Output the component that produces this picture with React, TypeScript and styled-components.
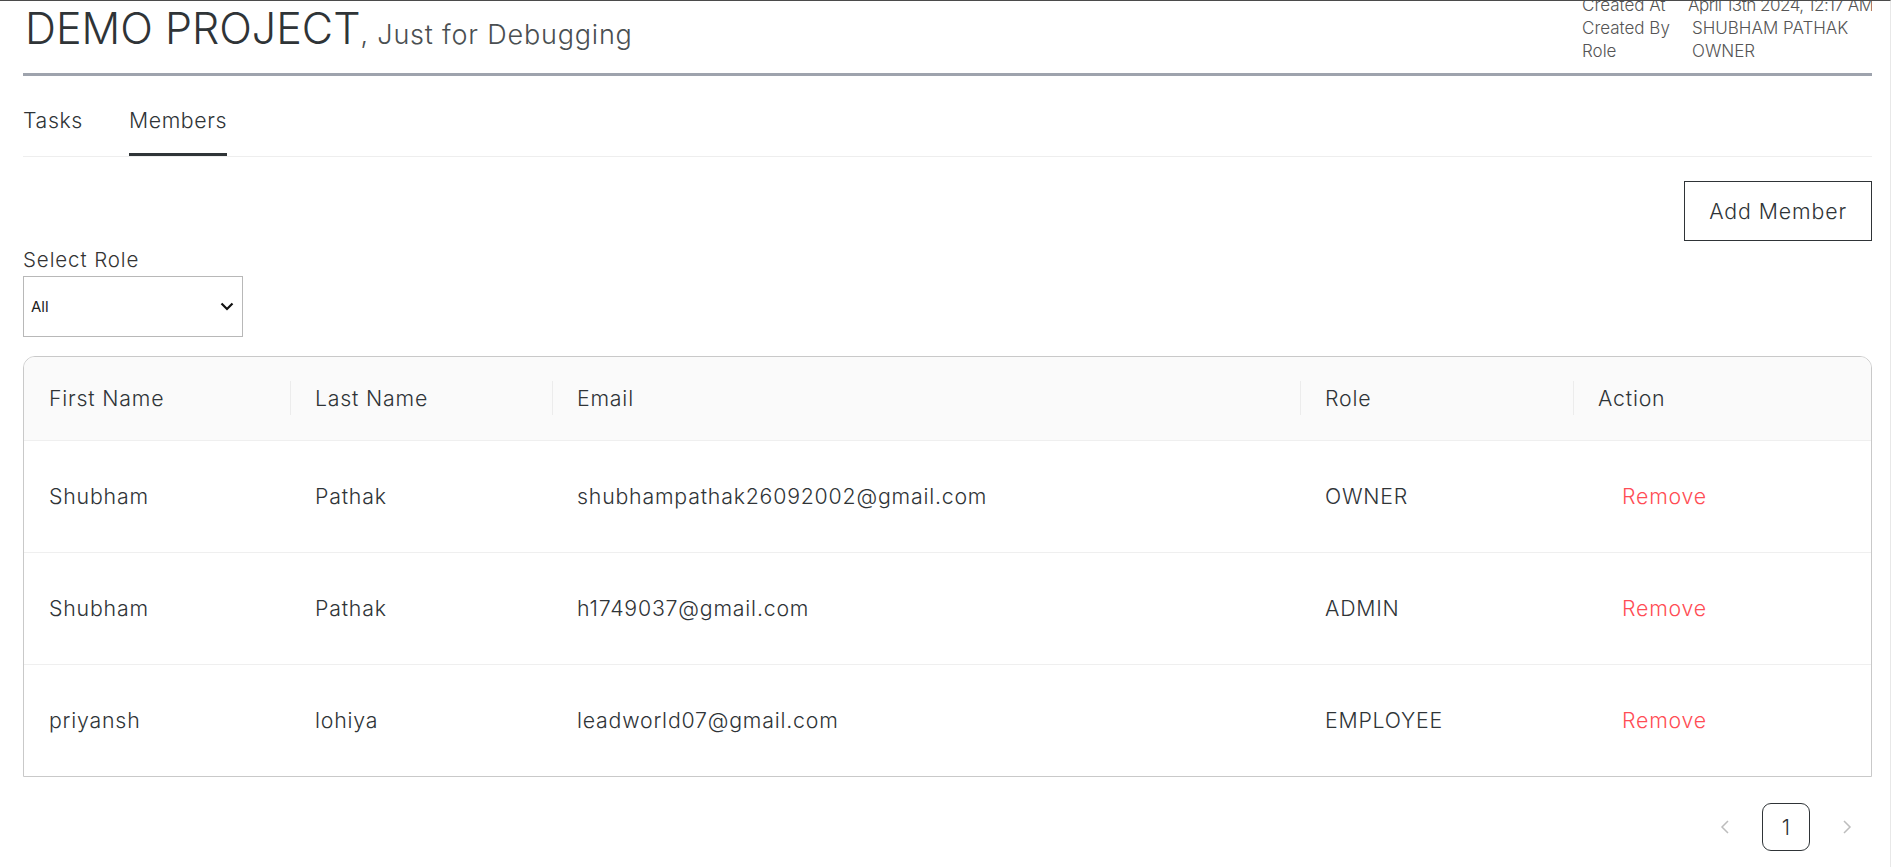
import React from 'react';
import styled, { createGlobalStyle } from 'styled-components';

const GlobalStyle = createGlobalStyle`
  html, body {
    margin: 0;
    padding: 0;
    background: #fff;
  }
  body {
    font-family: Inter, "Open Sans", sans-serif;
    font-weight: 300;
    color: #333;
  }
  * {
    box-sizing: border-box;
  }
`;

const Page = styled.div`
  width: calc(100% - 5px);
  min-height: 100vh;
  border-top: 1px solid #4b4b4b;
  border-right: 1px solid #e8e8e8;
  padding: 0 18px 0 23px;
`;

const Header = styled.header`
  display: flex;
  justify-content: space-between;
  align-items: flex-start;
  height: 75px;
  overflow: hidden;
  border-bottom: 3px solid #9ea3ad;
`;

const Title = styled.h1`
  margin: 6px 0 0 2px;
  font-size: 43px;
  line-height: 1;
  font-weight: 300;
  color: #2f3437;
  letter-spacing: 0;
`;

const SubTitle = styled.span`
  font-size: 27px;
  color: #4a4f52;
  letter-spacing: 0.8px;
`;

const Meta = styled.dl`
  display: grid;
  grid-template-columns: 106px 184px;
  grid-auto-rows: 23px;
  margin: -7px 0 0;
  font-size: 17px;
  line-height: 23px;
  color: #555;
`;

const MetaLabel = styled.dt`
  margin: 0;
`;

const MetaValue = styled.dd<{ $indent?: boolean; $tight?: boolean }>`
  margin: 0;
  padding-left: ${(p) => (p.$indent ? '4px' : '0')};
  letter-spacing: ${(p) => (p.$tight ? '-0.5px' : '0')};
  white-space: nowrap;
`;

const TabBar = styled.nav`
  display: flex;
  gap: 46px;
  margin-top: 28px;
  border-bottom: 1px solid #eee;
`;

const Tab = styled.div<{ $active?: boolean }>`
  font-size: 21.3px;
  line-height: 32px;
  letter-spacing: 0.6px;
  padding-bottom: 17px;
  color: #2f3437;
  border-bottom: 3px solid ${(p) => (p.$active ? '#2f3437' : 'transparent')};
  cursor: pointer;
`;

const Toolbar = styled.div`
  display: flex;
  justify-content: flex-end;
  margin-top: 24px;
`;

const OutlineButton = styled.button`
  height: 60px;
  padding: 0 24px;
  background: #fff;
  border: 1.5px solid #2f3437;
  border-radius: 0;
  font-family: inherit;
  font-weight: 300;
  font-size: 21.3px;
  letter-spacing: 0.9px;
  color: #2f3437;
  cursor: pointer;
`;

const Filter = styled.div`
  display: flex;
  flex-direction: column;
  align-items: flex-start;
  margin-top: 4px;
`;

const FilterLabel = styled.label`
  font-size: 20.5px;
  line-height: 30px;
  letter-spacing: 0.9px;
  color: #333;
  margin-bottom: 1px;
`;

const SelectBox = styled.div`
  display: flex;
  align-items: center;
  justify-content: space-between;
  width: 220px;
  height: 61px;
  padding: 0 8px 0 7px;
  border: 1px solid #b8b8b8;
  font-size: 15px;
  font-weight: 400;
  color: #222;
`;

const TableWrap = styled.div`
  margin-top: 19px;
  border: 1px solid #c9c9c9;
  border-radius: 12px 12px 0 0;
  overflow: hidden;
`;

const Table = styled.table`
  width: 100%;
  border-collapse: collapse;
  table-layout: fixed;
`;

const HeadCell = styled.th<{ $first?: boolean }>`
  position: relative;
  height: 83px;
  padding: 0 25px;
  background: #fafafa;
  border-bottom: 1px solid #efefef;
  text-align: left;
  font-weight: 300;
  font-size: 21.3px;
  letter-spacing: 0.8px;
  color: #2f3437;

  &::before {
    content: '';
    display: ${(p) => (p.$first ? 'none' : 'block')};
    position: absolute;
    left: 0;
    top: 50%;
    width: 1px;
    height: 34px;
    transform: translateY(-50%);
    background: #ececec;
  }
`;

const Row = styled.tr`
  &:not(:last-child) td {
    border-bottom: 1px solid #efefef;
  }
`;

const Cell = styled.td`
  height: 112px;
  padding: 0 25px;
  font-size: 21.3px;
  letter-spacing: 0.8px;
  color: #2f3437;
  white-space: nowrap;
`;

const RemoveLink = styled.span`
  padding-left: 24px;
  color: #ff4d55;
  cursor: pointer;
`;

const Pager = styled.div`
  display: flex;
  justify-content: flex-end;
  align-items: center;
  gap: 13px;
  margin-top: 26px;
  padding-right: 1px;
`;

const PagerArrow = styled.span`
  display: flex;
  align-items: center;
  justify-content: center;
  width: 48px;
  height: 48px;
`;

const PageNumber = styled.span`
  display: flex;
  align-items: center;
  justify-content: center;
  width: 48px;
  height: 48px;
  border: 1.5px solid #2f3437;
  border-radius: 9px;
  font-size: 21px;
  color: #2f3437;
`;

const Chevron = ({ dir }: { dir: 'left' | 'right' }) => (
  <svg width="12" height="16" viewBox="0 0 12 16" fill="none">
    <path
      d={dir === 'left' ? 'M9 2 L3 8 L9 14' : 'M3 2 L9 8 L3 14'}
      stroke="#bdbdbd"
      strokeWidth="1.5"
    />
  </svg>
);

const columns = [
  { key: 'first', title: 'First Name', width: 266 },
  { key: 'last', title: 'Last Name', width: 262 },
  { key: 'email', title: 'Email', width: 748 },
  { key: 'role', title: 'Role', width: 273 },
  { key: 'action', title: 'Action' },
];

const members = [
  { first: 'Shubham', last: 'Pathak', email: 'shubhampathak26092002@gmail.com', role: 'OWNER' },
  { first: 'Shubham', last: 'Pathak', email: 'h1749037@gmail.com', role: 'ADMIN' },
  { first: 'priyansh', last: 'lohiya', email: 'leadworld07@gmail.com', role: 'EMPLOYEE' },
];

const App: React.FC = () => {
  return (
    <>
      <GlobalStyle />
      <Page>
        <Header>
          <Title>
            DEMO PROJECT<SubTitle>, Just for Debugging</SubTitle>
          </Title>
          <Meta>
            <MetaLabel>Created At</MetaLabel>
            <MetaValue $tight>April 13th 2024, 12:17 AM</MetaValue>
            <MetaLabel>Created By</MetaLabel>
            <MetaValue $indent>SHUBHAM PATHAK</MetaValue>
            <MetaLabel>Role</MetaLabel>
            <MetaValue $indent>OWNER</MetaValue>
          </Meta>
        </Header>

        <TabBar>
          <Tab>Tasks</Tab>
          <Tab $active>Members</Tab>
        </TabBar>

        <Toolbar>
          <OutlineButton>Add Member</OutlineButton>
        </Toolbar>

        <Filter>
          <FilterLabel>Select Role</FilterLabel>
          <SelectBox>
            <span>All</span>
            <svg width="14" height="9" viewBox="0 0 14 9" fill="none">
              <path d="M1.5 1.5 L7 7 L12.5 1.5" stroke="#111" strokeWidth="2.2" />
            </svg>
          </SelectBox>
        </Filter>

        <TableWrap>
          <Table>
            <colgroup>
              {columns.map((c) => (
                <col key={c.key} style={c.width ? { width: c.width } : undefined} />
              ))}
            </colgroup>
            <thead>
              <tr>
                {columns.map((c, i) => (
                  <HeadCell key={c.key} $first={i === 0}>
                    {c.title}
                  </HeadCell>
                ))}
              </tr>
            </thead>
            <tbody>
              {members.map((m, idx) => (
                <Row key={`member-${idx}`}>
                  <Cell>{m.first}</Cell>
                  <Cell>{m.last}</Cell>
                  <Cell>{m.email}</Cell>
                  <Cell>{m.role}</Cell>
                  <Cell>
                    <RemoveLink>Remove</RemoveLink>
                  </Cell>
                </Row>
              ))}
            </tbody>
          </Table>
        </TableWrap>

        <Pager>
          <PagerArrow>
            <Chevron dir="left" />
          </PagerArrow>
          <PageNumber>1</PageNumber>
          <PagerArrow>
            <Chevron dir="right" />
          </PagerArrow>
        </Pager>
      </Page>
    </>
  );
};

export default App;
